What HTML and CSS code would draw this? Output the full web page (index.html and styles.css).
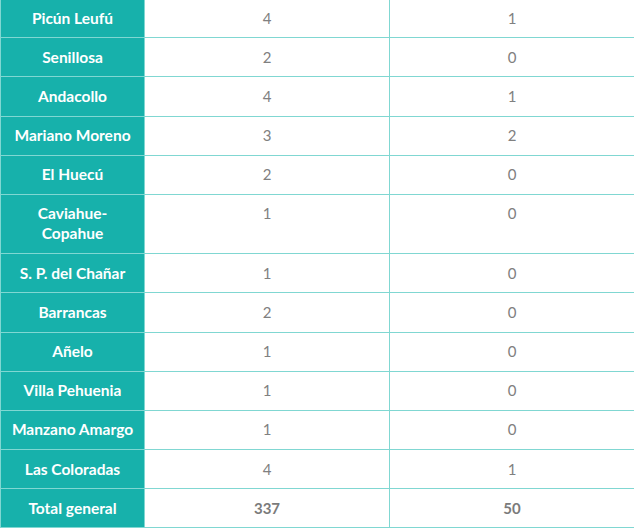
FILE: index.html
```html
<!DOCTYPE html>
<html lang="es">
<head>
<meta charset="utf-8">
<link rel="stylesheet" href="styles.css">
</head>
<body>
<table class="tabla">
  <colgroup>
    <col class="c-lugar">
    <col class="c-num">
    <col class="c-num">
  </colgroup>
  <tbody>
    <tr><th>Picún Leufú</th><td>4</td><td>1</td></tr>
    <tr><th>Senillosa</th><td>2</td><td>0</td></tr>
    <tr><th>Andacollo</th><td>4</td><td>1</td></tr>
    <tr><th>Mariano Moreno</th><td>3</td><td>2</td></tr>
    <tr><th>El Huecú</th><td>2</td><td>0</td></tr>
    <tr><th>Caviahue-<br>Copahue</th><td>1</td><td>0</td></tr>
    <tr><th>S. P. del Chañar</th><td>1</td><td>0</td></tr>
    <tr><th>Barrancas</th><td>2</td><td>0</td></tr>
    <tr><th>Añelo</th><td>1</td><td>0</td></tr>
    <tr><th>Villa Pehuenia</th><td>1</td><td>0</td></tr>
    <tr><th>Manzano Amargo</th><td>1</td><td>0</td></tr>
    <tr><th>Las Coloradas</th><td>4</td><td>1</td></tr>
    <tr class="total"><th>Total general</th><td>337</td><td>50</td></tr>
  </tbody>
</table>
</body>
</html>
```
FILE: styles.css
```css
html, body {
  margin: 0;
  padding: 0;
  background: #ffffff;
}

body {
  font-family: Lato, "Open Sans", "Liberation Sans", sans-serif;
  overflow: hidden;
}

.tabla {
  border-collapse: collapse;
  table-layout: fixed;
  width: 634px;
  margin-top: -2px;
  border: 1px solid #80d7d2;
}

.c-lugar { width: 144px; }
.c-num { width: 245px; }

.tabla th,
.tabla td {
  border: 1px solid #80d7d2;
  padding: 8.5px 2px 9.7px;
  line-height: 20px;
  text-align: center;
  vertical-align: top;
  font-size: 15px;
}

.tabla th {
  background: #17b1ab;
  color: #ffffff;
  font-weight: 700;
  font-size: 15.5px;
}

.tabla td {
  color: #808080;
  font-weight: 400;
}

.tabla .total td {
  font-weight: 700;
  color: #7b7b7b;
}
```
